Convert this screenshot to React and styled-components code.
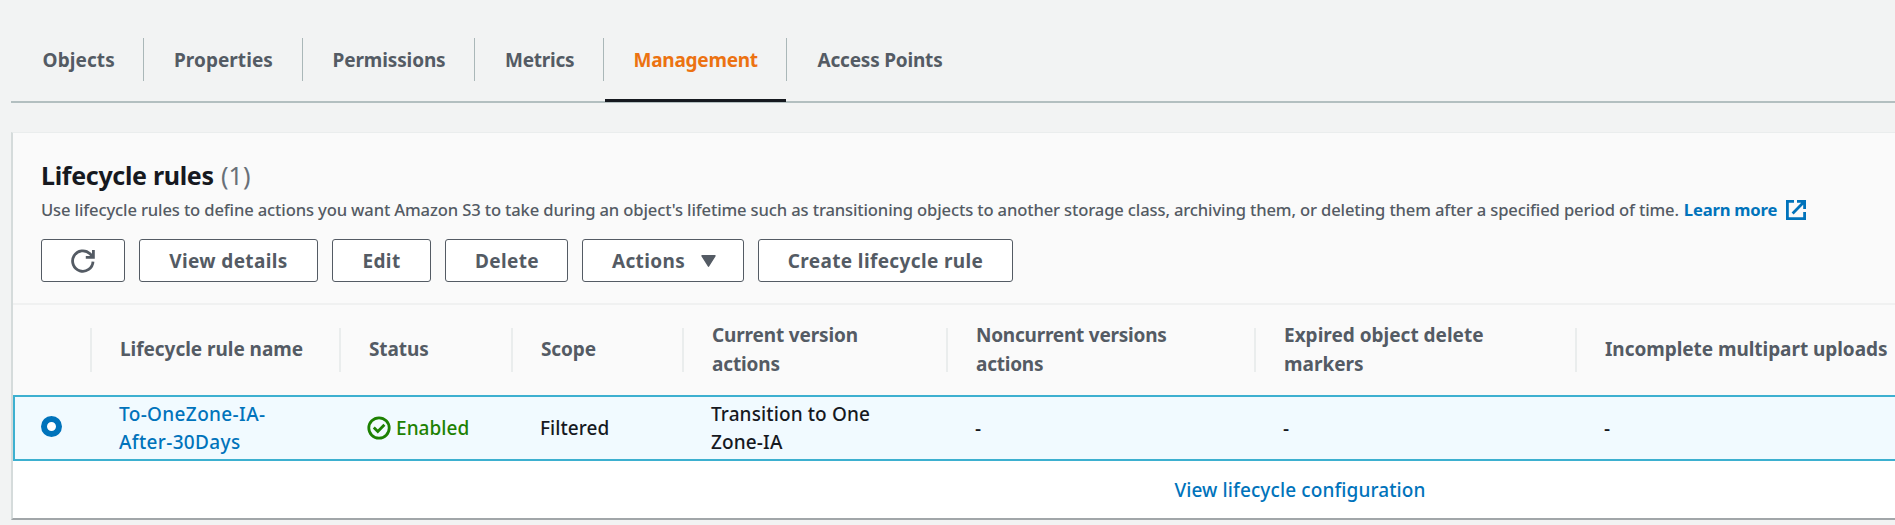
import React from "react";
import styled, { createGlobalStyle } from "styled-components";

const Global = createGlobalStyle`
  * { box-sizing: border-box; }
  html, body { margin: 0; overflow: hidden; background: #f2f3f3; }
  body { font-family: "Noto Sans", "Open Sans", sans-serif; font-size: 19px; font-weight: 500; color: #16191f; }
`;

const Page = styled.main`
  width: 1895px;
  height: 525px;
  padding-left: 11px;
  overflow: hidden;
`;

const TabBar = styled.nav`
  display: flex;
  height: 103px;
  padding-top: 38px;
  border-bottom: 2px solid #b3bfc0;
`;

const Tab = styled.a`
  position: relative;
  flex: none;
  width: ${(p) => p.$width}px;
  height: 43px;
  padding-left: ${(p) => p.$pad}px;
  border-right: ${(p) => (p.$last ? "none" : "1.5px solid #aab7b8")};
  line-height: 45px;
  font-weight: 700;
  letter-spacing: ${(p) => p.$spacing}px;
  white-space: nowrap;
  color: ${(p) => (p.$active ? "#ec7211" : "#545b64")};

  &::after {
    content: "";
    display: ${(p) => (p.$active ? "block" : "none")};
    position: absolute;
    left: 1px;
    right: 0;
    bottom: -21px;
    height: 3px;
    background: #16191f;
    border-radius: 0;
  }
`;

const Panel = styled.section`
  margin-top: 29px;
  height: 388px;
  background: #fff;
  border-top: 1px solid #eaeded;
  border-left: 2px solid #d5dbdb;
  border-bottom: 2px solid #a1a6a9;
`;

const PanelHeader = styled.header`
  height: 172px;
  padding: 27px 0 0 28px;
  background: #fafafa;
  border-bottom: 2px solid #f0f1f1;
`;

const Title = styled.h2`
  margin: 0;
  font-size: 25px;
  line-height: 30px;
  font-weight: 700;
  letter-spacing: -0.31px;
`;

const Counter = styled.span`
  margin-left: 1px;
  font-weight: 400;
  letter-spacing: 0.2px;
  color: #687078;
`;

const Description = styled.p`
  display: flex;
  align-items: center;
  margin: 7px 0 17px;
  height: 25px;
  font-size: 16.6px;
  line-height: 25px;
  letter-spacing: -0.142px;
  white-space: nowrap;
  color: #545b64;
`;

const LearnMore = styled.a`
  display: inline-flex;
  align-items: center;
  gap: 8px;
  margin-left: 5px;
  font-weight: 700;
  letter-spacing: -0.18px;
  color: #0073bb;
`;

const Toolbar = styled.div`
  display: flex;
  gap: 14px;
`;

const Button = styled.button`
  display: flex;
  align-items: center;
  justify-content: center;
  gap: 16px;
  flex: none;
  width: ${(p) => p.$width}px;
  height: 43px;
  padding: 0 0 0 ${(p) => p.$nudge || 0}px;
  border: 1.5px solid #545b64;
  border-radius: 3px;
  background: #fff;
  font: 700 19px "Noto Sans", "Open Sans", sans-serif;
  letter-spacing: 0.36px;
  white-space: nowrap;
  color: #545b64;
`;

const Row = styled.div`
  display: grid;
  grid-template-columns: 77px 249px 172px 171px 264px 308px 321px 1fr;
  align-items: center;
`;

const HeadRow = styled(Row)`
  height: 90px;
  background: #fafafa;
`;

const HeadCell = styled.div`
  display: flex;
  align-items: center;
  height: 44px;
  padding-left: 28px;
  padding-bottom: ${(p) => (p.$single ? 2 : 0)}px;
  border-left: ${(p) => (p.$plain ? "none" : "2px solid #eaeded")};
  line-height: 29px;
  font-weight: 700;
  letter-spacing: ${(p) => p.$spacing || 0}px;
  white-space: pre;
  color: #545b64;
`;

const SelectedRow = styled(Row)`
  height: 66px;
  background: #f1faff;
  box-shadow: inset 0 2px #3db0d0, inset 0 -2px #3db0d0, inset 2px 0 #3db0d0;
`;

const Cell = styled.div`
  display: flex;
  align-items: center;
  gap: 5px;
  padding-left: ${(p) => p.$pad || 29}px;
  line-height: 28px;
  letter-spacing: ${(p) => p.$spacing || 0}px;
  white-space: pre;
  color: ${(p) => p.$color || "#16191f"};
`;

const Radio = styled.span`
  width: 21px;
  height: 21px;
  margin: -3px 0 0 -1px;
  border: 6px solid #0073bb;
  border-radius: 50%;
  background: #fff;
`;

const Footer = styled.footer`
  display: flex;
  justify-content: center;
`;

const FooterLink = styled.a`
  margin-left: 692px;
  line-height: 58px;
  letter-spacing: 0.11px;
  color: #0073bb;
`;

const RefreshIcon = () => (
  <svg width="24" height="24" viewBox="0 0 24 24" fill="none" stroke="#545b64" strokeWidth="2.8">
    <path d="M22 12.6A10.2 10.2 0 1 1 19 4.8L22 8" />
    <path d="M22.4 1v7.4h-7.6" />
  </svg>
);

const CaretIcon = () => (
  <svg width="15" height="12" viewBox="0 0 15 12">
    <path d="M1 .8h13L7.5 11.2z" fill="#545b64" stroke="#545b64" strokeWidth="1.4" strokeLinejoin="round" />
  </svg>
);

const ExternalIcon = () => (
  <svg width="22" height="22" viewBox="0 0 22 22" fill="none" stroke="#0073bb" strokeWidth="2.8">
    <path d="M9 2.4H2.4v17.2h17.2V13" />
    <path d="M12 2.4h7.6V10M19.4 2.6 7.6 14.4" />
  </svg>
);

const CheckIcon = () => (
  <svg width="24" height="24" viewBox="0 0 24 24" fill="none" stroke="#1d8102" strokeWidth="2.8">
    <circle cx="12" cy="12" r="10.2" />
    <path d="M6.8 11.6l4 4 6.6-6.8" />
  </svg>
);

const tabs = [
  { label: "Objects", width: 133, pad: 31.5, spacing: 0.1 },
  { label: "Properties", width: 159, pad: 30, spacing: 0.04 },
  { label: "Permissions", width: 171.5, pad: 29.5, spacing: -0.12 },
  { label: "Metrics", width: 129.5, pad: 30.5, spacing: -0.24 },
  { label: "Management", width: 183, pad: 29.5, spacing: -0.25 },
  { label: "Access Points", width: 160, pad: 30.5, spacing: -0.2 },
];
const activeTab = "Management";

const heads = [
  { label: "Lifecycle rule name", spacing: -0.04 },
  { label: "Status", spacing: -0.1 },
  { label: "Scope", spacing: -0.1 },
  { label: "Current version\nactions", spacing: -0.15 },
  { label: "Noncurrent versions\nactions", spacing: -0.23 },
  { label: "Expired object delete\nmarkers", spacing: 0 },
  { label: "Incomplete multipart uploads", spacing: -0.05 },
];

export default function App() {
  return (
    <Page>
      <Global />
      <TabBar>
        {tabs.map((t, i) => (
          <Tab
            key={t.label}
            $width={t.width}
            $pad={t.pad}
            $spacing={t.spacing}
            $active={t.label === activeTab}
            $last={i === tabs.length - 1}
          >
            {t.label}
          </Tab>
        ))}
      </TabBar>
      <Panel>
        <PanelHeader>
          <Title>
            Lifecycle rules <Counter>(1)</Counter>
          </Title>
          <Description>
            Use lifecycle rules to define actions you want Amazon S3 to take during an object's lifetime such as
            transitioning objects to another storage class, archiving them, or deleting them after a specified period
            of time.
            <LearnMore>
              Learn more <ExternalIcon />
            </LearnMore>
          </Description>
          <Toolbar>
            <Button $width={84} aria-label="Refresh">
              <RefreshIcon />
            </Button>
            <Button $width={179}>View details</Button>
            <Button $width={99}>Edit</Button>
            <Button $width={123} $nudge={1}>
              Delete
            </Button>
            <Button $width={162} $nudge={2}>
              Actions <CaretIcon />
            </Button>
            <Button $width={255}>Create lifecycle rule</Button>
          </Toolbar>
        </PanelHeader>
        <HeadRow>
          <HeadCell $plain />
          {heads.map((h) => (
            <HeadCell key={h.label} $spacing={h.spacing} $single={!h.label.includes("\n")}>
              {h.label}
            </HeadCell>
          ))}
        </HeadRow>
        <SelectedRow>
          <Cell>
            <Radio />
          </Cell>
          <Cell $color="#0073bb" $spacing={0.35}>
            {"To-OneZone-IA-\nAfter-30Days"}
          </Cell>
          <Cell $color="#1d8102" $spacing={0.05} $pad={28}>
            <CheckIcon />
            Enabled
          </Cell>
          <Cell $spacing={0.05}>Filtered</Cell>
          <Cell $spacing={0.12}>{"Transition to One\nZone-IA"}</Cell>
          <Cell>-</Cell>
          <Cell>-</Cell>
          <Cell>-</Cell>
        </SelectedRow>
        <Footer>
          <FooterLink>View lifecycle configuration</FooterLink>
        </Footer>
      </Panel>
    </Page>
  );
}
